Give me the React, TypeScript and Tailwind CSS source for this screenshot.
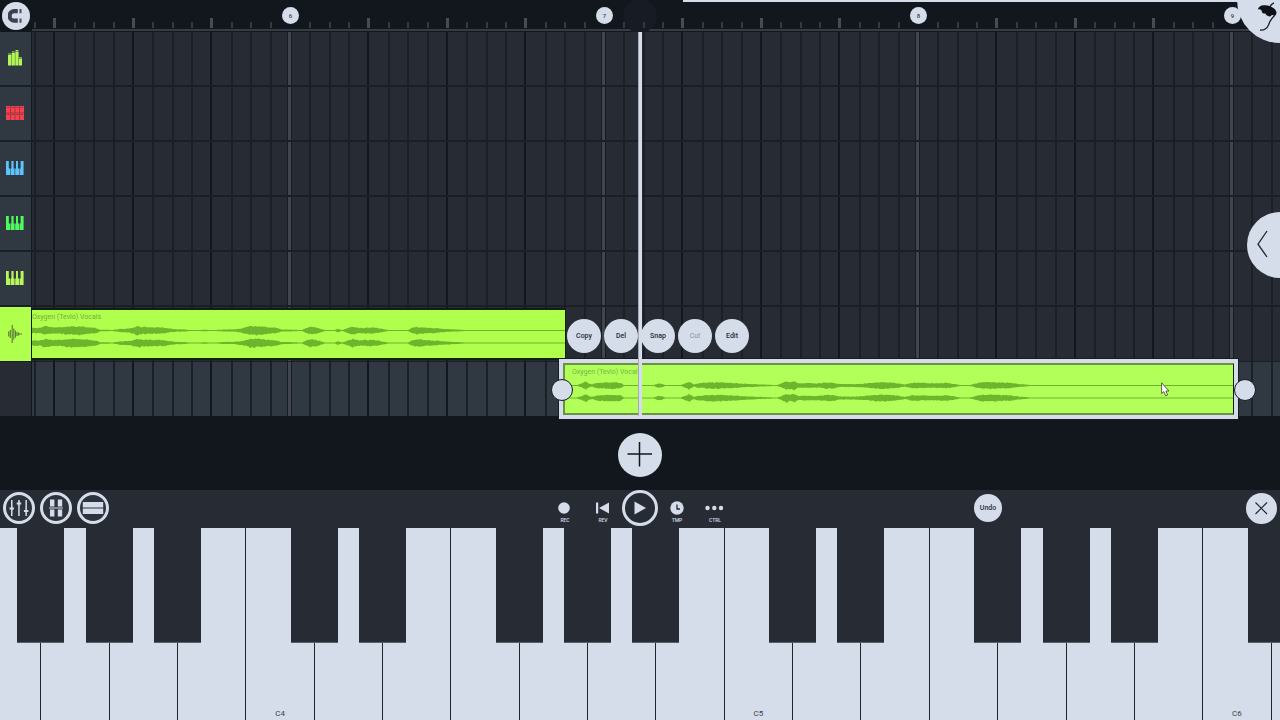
import type { ReactNode } from "react";

type Point = [number, number];

const BAR = 314;
const FIRST_BAR = 257.5;

const gridSteps = Array.from({ length: 130 }, (_, i) => {
  const n = i - 13;
  const kind = n % 16 === 0 ? "bar" : n % 4 === 0 ? "beat" : "step";
  return { x: Math.round(FIRST_BAR + (n * BAR) / 16), kind, bar: 6 + n / 16 };
});

const LAST_BAR = 9;
const rulerSteps = gridSteps.filter((s) => s.kind !== "bar" || s.bar <= LAST_BAR);

const lineClass: Record<string, string> = {
  bar: "-ml-[3px] w-[5px] border-x border-[#171b22] bg-[#41454e]",
  beat: "-ml-px w-[2px] bg-[#12161d]",
  step: "w-[2px] bg-[#1b1f26]",
};

const VOCALS_A: Point[] = [
  [0, 2.5], [8, 2.5], [13, 4], [21, 3], [28, 3], [38, 4], [50, 4], [58, 3], [64, 2.4], [68, 0.8], [81, 0.6],
  [88, 1.5], [98, 2], [105, 4], [111, 3.4], [120, 3], [130, 3], [138, 1.8], [145, 1], [151, 1.1], [158, 0.5],
  [173, 0.7], [183, 0.5], [193, 1], [203, 1.1], [210, 2], [218, 4], [228, 4], [236, 3], [244, 2.5], [250, 1],
  [258, 0.9], [270, 0.5], [273, 2], [278, 3.6], [284, 3], [290, 1.4], [293, 0.5], [303, 0.5], [306, 1.7],
  [310, 0.5], [315, 2], [321, 3.8], [328, 2.4], [338, 3], [346, 2.4], [353, 1], [357, 0.5], [376, 0.5],
  [380, 2.5], [385, 3.6], [393, 2.6], [402, 2.4], [414, 1.4], [426, 0.9], [435, 0.5], [533, 0.5],
];

const VOCALS_B: Point[] = [
  [0, 0.5], [12, 0.5], [17, 2], [21, 4], [24, 1.8], [27, 1], [31, 2.4], [40, 3], [50, 3.2], [56, 2.5], [59, 0.5],
  [89, 0.5], [93, 2], [97, 1.6], [100, 0.5], [116, 0.5], [120, 2], [124, 3.6], [129, 1], [132, 2], [142, 2.8],
  [156, 3], [168, 2.4], [180, 1.6], [195, 1], [212, 0.5], [217, 2], [221, 4], [225, 3], [229, 4.2], [233, 2],
  [243, 2.2], [253, 2], [263, 3], [269, 2.6], [275, 1.4], [290, 1.4], [302, 2], [312, 3], [324, 3], [334, 2],
  [340, 1], [347, 2.6], [358, 2.4], [368, 2], [382, 2.6], [389, 1.6], [395, 0.5], [405, 0.5], [411, 2],
  [418, 3.2], [432, 3], [446, 2.5], [454, 1.4], [466, 0.5], [669, 0.5],
];

function jitter(x: number, seed: number) {
  const v = Math.sin(x * 12.9898 + seed) * 43758.5453;
  return v - Math.floor(v);
}

function envelope(points: Point[], y: number) {
  const top: string[] = [];
  const bottom: string[] = [];
  for (let i = 0; i < points.length - 1; i++) {
    const [x0, a0] = points[i];
    const [x1, a1] = points[i + 1];
    for (let x = x0; x < x1; x += 1) {
      const a = a0 + ((a1 - a0) * (x - x0)) / (x1 - x0);
      const up = a > 0.9 ? a * (0.85 + 0.35 * jitter(x, y)) : a;
      const down = a > 0.9 ? a * (0.85 + 0.4 * jitter(x, y + 7)) : a;
      top.push(`${x},${(y - up).toFixed(1)}`);
      bottom.unshift(`${x},${(y + down).toFixed(1)}`);
    }
  }
  const end = points[points.length - 1][0];
  return [...top, `${end},${y - 0.5}`, `${end},${y + 0.5}`, ...bottom].join(" ");
}

function Waveform({ points, width }: { points: Point[]; width: number }) {
  return (
    <svg width={width} height={26} viewBox={`0 0 ${width} 26`} className="block fill-[#6cb52c]" aria-hidden="true">
      <polygon points={envelope(points, 6.5)} />
      <polygon points={envelope(points, 19)} />
    </svg>
  );
}

function PianoIcon({ className }: { className: string }) {
  return (
    <svg width="18" height="14" viewBox="0 0 18 14" className={className} aria-hidden="true">
      <path d="M0 0h2.800v7.500h1.500V14H0zM5.400 0h2.200v7.500h1V14H4.800V7.500h.6zM10 0h2v7.500h1V14H9.200V7.500h.8zM14.600 0H17.600v14h-4.100V7.500h1.100z" />
    </svg>
  );
}

function MixerIcon() {
  return (
    <svg width="14" height="16" viewBox="0 0 14 16" className="fill-[#b3f554]" aria-hidden="true">
      <path d="M0 5h3.200v10.500H0zM.3 3.600h2.600v.9H.3zM3.600 3h3.300v12.500H3.600zM4 1.400h2.600v1H4zM7.300 1.400h3.300v14.100H7.300zM7.600 0h2.700v.9H7.600zM11 8.600h3v6.900h-3zM11.200 7.200h2.600v.8h-2.600z" />
    </svg>
  );
}

function PadsIcon() {
  return (
    <svg width="18" height="14" viewBox="0 0 18 14" aria-hidden="true">
      <path className="fill-[#f4434f]" d="M0 0h18v14H0z" />
      <path className="stroke-[#8f323e]" strokeWidth="0.800" d="M4.500 0v14M9 0v14M13.500 0v14M0 7h18" />
      <path className="stroke-[#8d2c37]" strokeWidth="0.800" d="M1 1.500h2.400M5.600 1.500H8M10.200 1.500h2.300M14.700 1.500H17M1 8.500h2.400M5.600 8.500H8M10.200 8.500h2.300M14.700 8.500H17" />
    </svg>
  );
}

function AudioIcon() {
  return (
    <svg width="14" height="20" viewBox="0 0 14 20" className="stroke-[#5a7a3c]" strokeWidth="1.100" fill="none" aria-hidden="true">
      <path d="M.7 7.500v5M2.300 6v8M4.200 1v18M5.800 4.500v11M7.500 6.500v7M9 8v4M10.500 8.500v3M10 10h4" />
    </svg>
  );
}

const tracks: { name: string; icon: ReactNode }[] = [
  { name: "Mixer", icon: <MixerIcon /> },
  { name: "Drums", icon: <PadsIcon /> },
  { name: "Keys blue", icon: <PianoIcon className="fill-[#5cc4fb]" /> },
  { name: "Keys green", icon: <PianoIcon className="fill-[#4dfb5d]" /> },
  { name: "Keys lime", icon: <PianoIcon className="fill-[#b8f75a]" /> },
];

const clipActions = [
  { label: "Copy" },
  { label: "Del" },
  { label: "Snap" },
  { label: "Cut", disabled: true },
  { label: "Edit" },
];

function Ruler() {
  return (
    <header className="relative flex h-8 overflow-hidden bg-[#12171e] pb-px">
      <div className="flex w-8 shrink-0 items-center justify-center">
        <button type="button" aria-label="Snap to grid" className="flex size-7 items-center justify-center rounded-full bg-[#d4dde9]">
          <svg width="16" height="16" viewBox="0 0 16 16" aria-hidden="true">
            <path d="M9.800 3.200H6.300a4.700 4.700 0 0 0 0 9.400h3.500" fill="none" className="stroke-[#3c414a]" strokeWidth="4.200" />
            <path d="M11.500 1.100h2v4.200h-2zM11.500 10.500h2v4.200h-2z" className="fill-[#4a4f58]" />
          </svg>
        </button>
      </div>
      <div className="relative grow border-b-2 border-[#383c45]">
        <div className="absolute -top-px left-[591px] size-[34px] rounded-full bg-[#171b24]" />
        {rulerSteps.map((s) =>
          s.kind === "bar" ? (
            <span
              key={s.x}
              className="absolute top-[7px] -ml-2 flex size-[17px] items-center justify-center rounded-full bg-[#d4dde9] text-[6px] font-medium text-[#3c414a]"
              style={{ left: s.x }}
            >
              {s.bar}
            </span>
          ) : (
            <span
              key={s.x}
              className={
                s.kind === "beat"
                  ? "absolute bottom-px -ml-px h-[10px] w-[3px] bg-[#474b53]"
                  : "absolute bottom-px h-[6px] w-[2px] bg-[#343840]"
              }
              style={{ left: s.x }}
            />
          ),
        )}
        <div className="absolute top-0 right-0 left-[651px] h-[2px] bg-[#d4dde9]" />
      </div>
    </header>
  );
}

function GridLines() {
  return (
    <div className="pointer-events-none absolute inset-y-0 right-0 left-8 overflow-hidden">
      {gridSteps.map((s) => (
        <span key={s.x} className={`absolute inset-y-0 ${lineClass[s.kind]}`} style={{ left: s.x }} />
      ))}
    </div>
  );
}

function Playlist() {
  return (
    <main className="relative bg-[#272b33]">
      <div className="absolute inset-x-0 bottom-0 h-[54px] bg-[#303841]" />
      <GridLines />
      {tracks.map((t) => (
        <section key={t.name} className="relative flex h-[55px] border-b-2 border-[#1a1e25]">
          <button type="button" aria-label={t.name} className="flex w-[31px] items-center justify-center bg-[#303841] pr-[2px] pb-[2px]">
            {t.icon}
          </button>
          <div className="w-px bg-[#13171e]" />
        </section>
      ))}
      <section className="relative flex h-[55px] border-b border-[#1a1e25]">
        <button type="button" aria-label="Audio track" className="flex w-[31px] shrink-0 items-center justify-center bg-[#b0ff4c] pr-[2px]">
          <AudioIcon />
        </button>
        <div className="w-px shrink-0 bg-[#13171e]" />
        <div className="flex items-start gap-px pt-px">
          <div className="flex h-[52px] w-[534px] flex-col overflow-hidden border-y-2 border-r border-[#14200f] bg-[#b0ff4c]">
            <span className="h-[14px] pt-px text-[7px] leading-[12px] text-[#76ad3e]">Oxygen (Tevlo) Vocals</span>
            <Waveform points={VOCALS_A} width={533} />
          </div>
          <div className="flex gap-[3px] pt-[11px]">
            {clipActions.map((a) => (
              <button
                key={a.label}
                type="button"
                disabled={a.disabled}
                className="flex size-[34px] items-center justify-center rounded-full bg-[#d4dde9] text-[7px] font-medium text-[#272b33] disabled:font-normal disabled:text-[#8d939e]"
              >
                {a.label}
              </button>
            ))}
          </div>
        </div>
      </section>
      <section className="relative flex h-[54px]">
        <div className="w-[31px] bg-[#272b33]" />
        <div className="w-px bg-[#13171e]" />
        <div className="absolute -top-[3px] left-[559px] h-[60px] w-[679px] border-4 border-[#d4dde9] outline outline-[#171b22]">
          <div className="flex h-full flex-col border-y-2 border-r border-l-2 border-[#6b9048] border-r-[#14200f] bg-[#b3ff59]">
            <span className="h-[14px] pt-px pl-[7px] text-[7px] leading-[12px] text-[#76b544]">Oxygen (Tevlo) Vocals</span>
            <Waveform points={VOCALS_B} width={668} />
          </div>
          <button type="button" aria-label="Resize clip start" className="absolute top-[16px] -left-[12px] size-[22px] rounded-full border border-[#171b22] bg-[#d4dde9]" />
          <button type="button" aria-label="Resize clip end" className="absolute top-[16px] -right-[22px] size-[22px] rounded-full border border-[#171b22] bg-[#d4dde9]" />
          <svg width="9" height="15" viewBox="0 0 9 15" className="absolute top-[19px] left-[598px]" aria-hidden="true">
            <path d="M.6.8v10.800l2.300-2 1.700 4.200 2-.8-1.700-4h3.100z" className="fill-white stroke-[#35402b]" strokeWidth="0.800" />
          </svg>
        </div>
      </section>
      <div className="absolute inset-y-0 left-1/2 -ml-[2px] w-[4px] border-l border-[#a3aab6] bg-[#d4dde9]" />
      <button type="button" aria-label="Open side panel" className="absolute top-[180px] right-0 h-[66px] w-[33px] rounded-l-full bg-[#d4dde9]">
        <svg width="33" height="66" viewBox="0 0 33 66" fill="none" className="stroke-[#20242c]" strokeWidth="1.300" aria-hidden="true">
          <path d="M20 19l-9 13.200L20 45" />
        </svg>
      </button>
    </main>
  );
}

function RoundTool({ name, children }: { name: string; children: ReactNode }) {
  return (
    <button type="button" aria-label={name} className="flex size-8 items-center justify-center rounded-full border-[3px] border-[#d4dde9] bg-[#2e343d]">
      <svg width="22" height="20" viewBox="0 0 22 20" className="shrink-0 fill-[#d4dde9]" aria-hidden="true">
        {children}
      </svg>
    </button>
  );
}

function TransportItem({ label, children }: { label: string; children: ReactNode }) {
  return (
    <button type="button" className="flex h-[38px] w-[38px] flex-col items-center justify-end pb-[5px] text-[5px] leading-[6px] font-medium text-[#d4dde9]">
      <svg width="20" height="14" viewBox="0 0 20 14" className="mb-[2px] fill-[#d4dde9]" aria-hidden="true">
        {children}
      </svg>
      {label}
    </button>
  );
}

function Transport() {
  return (
    <div className="grid h-[38px] grid-cols-[1fr_auto_1fr] items-center bg-[#272b33]">
      <div className="flex gap-[5px] pb-[2px] pl-[3px]">
        <RoundTool name="Mixer">
          <path d="M3 2h1.500v6.500H3zM3 12.500h1.500V18H3zM10.200 2h1.500v1.500h-1.500zM10.200 7.500h1.500V18h-1.500zM17.400 2h1.500v9h-1.500zM17.400 15h1.500v3h-1.500z" />
          <path d="M1.500 9.600h4.500v1.800H1.500zM8.700 4.600h4.500v1.800H8.700zM15.900 12.100h4.500v1.800h-4.500zM3 8h1.500v5H3zM10.200 3h1.500v5h-1.500zM17.400 10.500h1.500v5h-1.500z" />
        </RoundTool>
        <RoundTool name="Patterns">
          <path d="M5 1.500h4.400v7H5zM12.800 1.500h4.400v7h-4.400zM5 11.500h4.400v7H5zM12.800 11.500h4.400v7h-4.400zM4 9.500h14v1H4z" />
        </RoundTool>
        <RoundTool name="Split view">
          <path d="M.8 4h20.400v5.500H.8zM.8 10.600h20.400v5.500H.8z" />
        </RoundTool>
      </div>
      <div className="flex items-center">
        <TransportItem label="REC">
          <circle cx="9" cy="7" r="5.800" />
        </TransportItem>
        <TransportItem label="REV">
          <path d="M3 1.500h2.200v11H3zM16 1.500v11L6 7z" />
        </TransportItem>
        <button type="button" aria-label="Play" className="-mt-[2px] flex size-9 items-center justify-center rounded-full border-[3px] border-[#d4dde9]">
          <svg width="14" height="14" viewBox="0 0 14 14" className="fill-[#d4dde9]" aria-hidden="true">
            <path d="M1.500.5L13 7 1.500 13.500z" />
          </svg>
        </button>
        <TransportItem label="TMP">
          <circle cx="10" cy="7" r="6.700" />
          <path d="M10 3.500V8h3" fill="none" className="stroke-[#272b33]" strokeWidth="1.300" />
        </TransportItem>
        <TransportItem label="CTRL">
          <circle cx="2.500" cy="7" r="2.200" />
          <circle cx="9.300" cy="7" r="2.200" />
          <circle cx="16" cy="7" r="2.200" />
        </TransportItem>
      </div>
      <div className="flex items-center justify-between pr-[3px] pb-[2px] pl-[240px]">
        <button type="button" className="flex size-7 items-center justify-center rounded-full bg-[#d4dde9] text-[7px] font-medium text-[#272b33]">
          Undo
        </button>
        <button type="button" aria-label="Close" className="flex size-[31px] items-center justify-center rounded-full bg-[#d4dde9]">
          <svg width="13" height="13" viewBox="0 0 13 13" className="stroke-[#20242c]" strokeWidth="1.100" aria-hidden="true">
            <path d="M.5.500l11.500 11.500M12 .5L.5 12" />
          </svg>
        </button>
      </div>
    </div>
  );
}

const NOTES = ["C", "D", "E", "F", "G", "A", "B"];
const whiteKeys = Array.from({ length: 20 }, (_, i) => {
  const note = NOTES[(i + 3) % 7];
  const octave = 3 + Math.floor((i + 3) / 7);
  return { note, octave, sharp: note !== "E" && note !== "B" };
});

function Keyboard() {
  return (
    <div className="overflow-hidden bg-[#d4dde9]">
      <div className="-mr-[60px] -ml-[27px] flex h-48">
        {whiteKeys.map((k) => (
          <div key={k.note + k.octave} className="relative flex-1">
            <button
              type="button"
              aria-label={k.note + k.octave}
              className="flex size-full items-end justify-center border-r border-[#20242b] bg-[#d4dde9] text-[8px] leading-[12px] text-[#3c414a]"
            >
              {k.note === "C" ? `C${k.octave}` : null}
            </button>
            {k.sharp && (
              <button
                type="button"
                aria-label={`${k.note}#${k.octave}`}
                className="absolute top-0 -right-[23px] z-10 h-[115px] w-[47px] border-b border-[#5a606b] bg-[#272b33]"
              />
            )}
          </div>
        ))}
      </div>
    </div>
  );
}

export default function App() {
  return (
    <div className="relative flex min-h-screen flex-col overflow-hidden bg-[#12171e] font-['Roboto',sans-serif]">
      <Ruler />
      <Playlist />
      <div className="flex min-h-[74px] grow items-center justify-center pt-[3px]">
        <button type="button" aria-label="Add track" className="flex size-11 items-center justify-center rounded-full bg-[#d4dde9]">
          <svg width="26" height="26" viewBox="0 0 26 26" className="stroke-[#12171e]" strokeWidth="1.500" aria-hidden="true">
            <path d="M12.500 0v24.500M.5 12h24.500" />
          </svg>
        </button>
      </div>
      <Transport />
      <Keyboard />
      <button type="button" aria-label="Main menu" className="absolute top-0 right-0 size-[43px] rounded-bl-full bg-[#d4dde9]">
        <svg width="43" height="43" viewBox="0 0 43 43" aria-hidden="true">
          <path d="M20.800 9.500c.8-2.500 3-4.500 6.500-4.200 2.500-.3 5.500.4 7.700 1.900 2.600 1.200 4.200 3 4.500 5.300-.2 2-.9 3-2.200 3.500-.8-1-1.600-1.300-2.500-1-.8 1.300-1.900 1.700-3.200 1.200-1.500-.5-2.600-1.500-3.200-2.800-1.600.3-2.900-.2-3.500-1.500-.2-.8-.3-1.400-.6-2-1.200-.6-2.300-.9-3.500-.4z" className="fill-[#0e1218]" />
          <path d="M37 2.800c-2 .6-3 2-3.700 3.700M38 15c-2.500 2.500-5.500 6-6.500 10-1.500 3.500-4 5.500-8.500 5" fill="none" className="stroke-[#20242c]" strokeWidth="1.300" />
        </svg>
      </button>
    </div>
  );
}
